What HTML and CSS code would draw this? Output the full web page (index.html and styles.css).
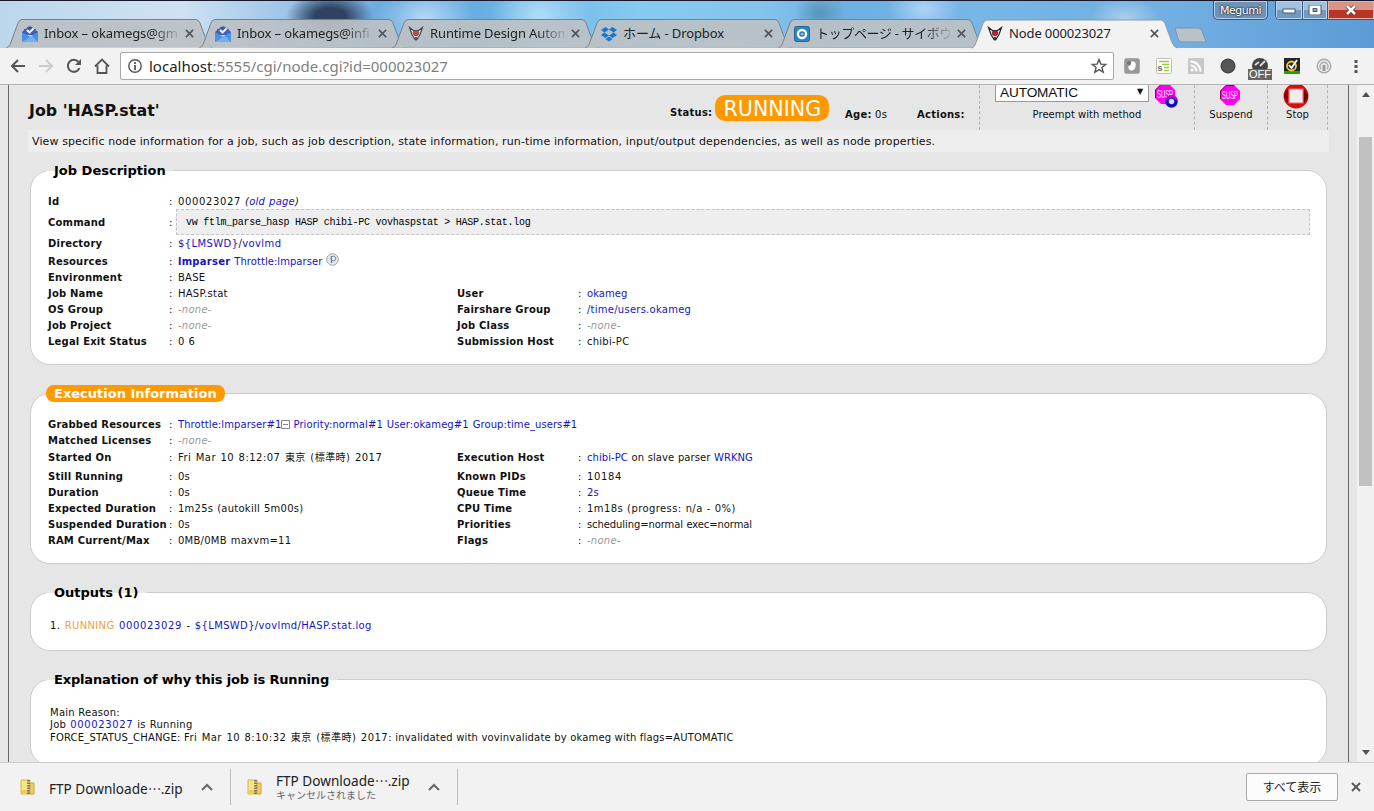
FILE: index.html
```html
<!DOCTYPE html>
<html lang="ja">
<head>
<meta charset="utf-8">
<title>Node 000023027</title>
<link rel="stylesheet" href="styles.css">
</head>
<body>
<svg class="defs" aria-hidden="true">
  <symbol id="tab" viewBox="0 0 207 29"><path d="M.5 28.5C3 28 4 26 5 23L12 4Q13.5.5 16 .5H190Q192.500 .5 194 4L201 23Q203 28 206.500 28.500"/></symbol>
  <symbol id="close" viewBox="0 0 10 10"><path d="M1 1l8 8M9 1L1 9" fill="none" stroke="#555" stroke-width="1.800"/></symbol>
  <symbol id="inbox" viewBox="0 0 16 16"><path d="M0 6L6 1Q8-.5 10 1l6 5v3H0z" fill="#3a55ae"/><path d="M2 3l12 0v6H2z" fill="#4260bd"/><path d="M5 4L7.500 6.500l4-4" fill="none" stroke="#fff" stroke-width="1.800"/><path d="M0 6l8 5 8-5v10H0z" fill="#4c91df"/><path d="M0 16l10-6 6 6z" fill="#70b0f0"/></symbol>
  <symbol id="fox" viewBox="0 0 16 16"><path d="M1.500 1.500L5.500 4.500h5l4-3L12 8.500 9 13.500H7L4 8.500z" fill="#e8e8e8" stroke="#222" stroke-width="1.200"/><circle cx="8" cy="7" r="2.700" fill="#e31515" stroke="#333" stroke-width=".8"/><path d="M7 11h2v3.500H7z" fill="#333"/></symbol>
  <symbol id="zip" viewBox="0 0 16 16"><path d="M1 1h9v14H1z" fill="#f7e487" stroke="#d9b845"/><path d="M10 4h4v11h-4z" fill="#edcf65" stroke="#c9a237"/><path d="M1.500 11h8v3.500h-8z" fill="#edcb58"/><path d="M8.500 1v14" stroke="#696969" stroke-width="2.500" stroke-dasharray="1.500 1"/></symbol>
  <symbol id="chev" viewBox="0 0 12 8"><path d="M1 7l5-5 5 5" fill="none" stroke="#666" stroke-width="2"/></symbol>
  <symbol id="oct" viewBox="0 0 20 20"><path d="M6 0h8l6 6v8l-6 6H6l-6-6V6z" fill="#f0e"/><path d="M14 .5H6L.5 6v8" fill="none" stroke="#801040"/></symbol>
</svg>

<header class="titlebar">
  <nav class="tabs">
    <div class="tab"><svg class="tab-bg"><use href="#tab"/></svg><svg class="fav"><use href="#inbox"/></svg><span class="name fade">Inbox – okamegs@gm</span><svg class="x"><use href="#close"/></svg></div>
    <div class="tab"><svg class="tab-bg"><use href="#tab"/></svg><svg class="fav"><use href="#inbox"/></svg><span class="name fade">Inbox – okamegs@infi</span><svg class="x"><use href="#close"/></svg></div>
    <div class="tab"><svg class="tab-bg"><use href="#tab"/></svg><svg class="fav dim"><use href="#fox"/></svg><span class="name fade">Runtime Design Autom</span><svg class="x"><use href="#close"/></svg></div>
    <div class="tab"><svg class="tab-bg"><use href="#tab"/></svg><svg class="fav" viewBox="0 0 16 16"><path d="M4.500 1L8 3.500 3.500 6.500 0 4zM11.500 1L8 3.500l4.500 3L16 4zM0 9l3.500-2.500L8 9.500 4.500 12zM16 9l-3.500-2.500L8 9.500l3.500 2.500zM8 10.500l3.500 2.500L8 15.500 4.500 13z" fill="#1677d2"/></svg><span class="name">ホーム - Dropbox</span><svg class="x"><use href="#close"/></svg></div>
    <div class="tab"><svg class="tab-bg"><use href="#tab"/></svg><svg class="fav" viewBox="0 0 16 16"><rect x=".5" y=".5" width="15" height="15" rx="2" fill="#2986c4" stroke="#2e6489"/><circle cx="8" cy="8" r="4" fill="#1d6fac" stroke="#fff" stroke-width="2.400"/><circle cx="8" cy="8" r="1.500" fill="#8bc4e7"/></svg><span class="name fade jp">トップページ - サイボウ</span><svg class="x"><use href="#close"/></svg></div>
    <div class="tab active"><svg class="tab-bg"><use href="#tab"/></svg><svg class="fav"><use href="#fox"/></svg><span class="name">Node 000023027</span><svg class="x"><use href="#close"/></svg></div>
    <svg class="newtab" viewBox="0 0 33 16"><path d="M1 1h23q3 0 4 3l4 11H8q-3 0-4-3z" fill="#b8c2c9" stroke="#7f94a7"/></svg>
  </nav>
  <div class="user">Megumi</div>
  <div class="winbtns">
    <span class="wb min"><svg viewBox="0 0 14 10"><rect x="1" y="4" width="12" height="4" fill="#fff" stroke="#485870"/></svg></span>
    <span class="wb max"><svg viewBox="0 0 14 10"><path d="M1 0h12v10H1zM5 3.500v3h4v-3z" fill="#fff" fill-rule="evenodd" stroke="#485870"/></svg></span>
    <span class="wb cls"><svg viewBox="0 0 14 10"><path d="M3 1l8 8M11 1L3 9" stroke="#533" stroke-width="4"/><path d="M3 1l8 8M11 1L3 9" stroke="#fff" stroke-width="2.500"/></svg></span>
  </div>
</header>

<div class="toolbar">
  <svg class="nav" viewBox="0 0 16 16"><path d="M15 8H2M8 2L2 8l6 6" fill="none" stroke="#555" stroke-width="2"/></svg>
  <svg class="nav" viewBox="0 0 16 16"><path d="M1 8h13M8 2l6 6-6 6" fill="none" stroke="#ccc" stroke-width="2"/></svg>
  <svg class="nav" viewBox="0 0 16 16"><path d="M13.500 10A6 6 0 1 1 12.500 4" fill="none" stroke="#555" stroke-width="2"/><path d="M15 1v6H9z" fill="#555"/></svg>
  <svg class="nav" viewBox="0 0 16 16"><path d="M1 8.500L8 1.500l7 7M3.500 7.500V15h9V7.500" fill="none" stroke="#555" stroke-width="1.800"/></svg>
  <div class="omnibox">
    <svg class="info" viewBox="0 0 14 14"><circle cx="7" cy="7" r="6.200" fill="none" stroke="#555" stroke-width="1.400"/><path d="M7 3v2M7 6v5" stroke="#555" stroke-width="1.800"/></svg>
    <span class="url"><b>localhost</b>:5555/cgi/node.cgi?id=000023027</span>
    <svg class="star" viewBox="0 0 16 16"><path d="M8 1.500l1.800 4.600 4.900.3-3.800 3.100 1.300 4.800L8 11.600l-4.200 2.700 1.300-4.800-3.800-3.100 4.900-.3z" fill="none" stroke="#555" stroke-width="1.400"/></svg>
  </div>
  <div class="exts">
    <svg viewBox="0 0 16 16"><rect x=".5" y=".5" width="15" height="15" rx="2" fill="#989898" stroke="#aaa"/><path d="M7 3.500C11 3 12.500 5 11.500 8.500 11 11 9.500 12.500 8 12.500 5 12.500 4 10.500 4.500 8 6.500 8 7.500 6 7 3.500z" fill="#fff"/><circle cx="5" cy="5" r="2" fill="#777"/></svg>
    <svg viewBox="0 0 16 16"><rect x=".5" y=".5" width="15" height="15" rx="1" fill="#fff" stroke="#bbb"/><path d="M3 3.500h10M6 6.500h7M8 9.500h5M8 12.500h5" stroke="#9c3" stroke-width="1.500"/><text x="1.500" y="13" font-size="9" font-weight="bold" fill="#666">s</text></svg>
    <svg viewBox="0 0 16 16"><rect width="16" height="16" rx="1" fill="#c8c8c8"/><circle cx="4" cy="12" r="1.500" fill="#fff"/><path d="M2.500 7.500a6 6 0 0 1 6 6M2.500 3.500a10 10 0 0 1 10 10" fill="none" stroke="#fff" stroke-width="2"/></svg>
    <svg viewBox="0 0 16 16"><circle cx="8" cy="8" r="7" fill="#555" stroke="#333"/></svg>
    <span class="offext"><svg viewBox="0 0 16 16"><circle cx="8" cy="8" r="8" fill="#444"/><path d="M3 7l4-3M8 8l5-5" stroke="#ddd" fill="none" stroke-width="1.800"/></svg><i>OFF</i></span>
    <svg viewBox="0 0 16 16"><rect width="16" height="16" fill="#252525"/><path d="M0 14.500h16" stroke="#1a0" stroke-width="3"/><circle cx="7.500" cy="8" r="4.500" fill="none" stroke="#fdc515" stroke-width="1.800"/><path d="M5 7l2.500 3L13 2" fill="none" stroke="#fff" stroke-width="1.800"/></svg>
    <svg viewBox="0 0 16 16"><circle cx="8" cy="8" r="6.800" fill="#eee" stroke="#aaa" stroke-width="1.400"/><path d="M5 11a4 4 0 1 1 6 0" fill="none" stroke="#aaa" stroke-width="1.500"/><path d="M6.500 7h3v6h-3z" fill="#999"/></svg>
    <svg viewBox="0 0 16 16"><path d="M6.500 2h3v3h-3zM6.500 7h3v3h-3zM6.500 12h3v3h-3z" fill="#555"/></svg>
  </div>
</div>

<div class="viewport">
  <main class="page">
    <div class="head">
      <h1>Job 'HASP.stat'</h1>
      <div class="status"><b>Status:</b><span class="badge">RUNNING</span></div>
      <div class="age"><b>Age:</b> 0s</div>
      <div class="actlabel"><b>Actions:</b></div>
      <div class="cell preempt">
        <div class="line"><span class="select">AUTOMATIC<i>▼</i></span><svg class="pre" viewBox="0 0 24 24"><use href="#oct" x="0" y="0" width="20" height="20"/><text x="2" y="14" font-size="10" class="susp" textLength="16" lengthAdjust="spacingAndGlyphs">SUSP</text><circle cx="16.500" cy="17.500" r="4.500" fill="#dde" stroke="#11b" stroke-width="3.500"/><path d="M11.500 16a5.200 5.200 0 0 1 10 0" fill="none" stroke="#c0c" stroke-width="2.500"/></svg></div>
        <span>Preempt with method</span>
      </div>
      <div class="cell suspend"><svg class="ic20" viewBox="0 0 20 20"><use href="#oct" width="20" height="20"/><text x="2" y="14" font-size="10" class="susp" textLength="16" lengthAdjust="spacingAndGlyphs">SUSP</text></svg><span>Suspend</span></div>
      <div class="cell stop"><svg class="ic26" viewBox="0 0 26 26"><circle cx="13" cy="13" r="12.500" fill="#d80d0d"/><path d="M1 13a12 12 0 0 1 4-7v14a12 12 0 0 1-4-7M25 13a12 12 0 0 0-4-7v14a12 12 0 0 0 4-7" fill="#790000"/><rect x="6" y="6" width="14" height="14" fill="#eee" stroke="#f66"/></svg><span>Stop</span></div>
    </div>
    <div class="desc">View specific node information for a job, such as job description, state information, run-time information, input/output dependencies, as well as node properties.</div>

    <section class="panel p1">
      <h2>Job Description</h2>
      <div class="row low"><b>Id</b><i>:</i><span><span class="num">000023027</span> <em>(<a>old page</a>)</em></span></div>
      <div class="row cmd"><b>Command</b><i>:</i><code>vw ftlm_parse_hasp HASP chibi-PC vovhaspstat &gt; HASP.stat.log</code></div>
      <div class="row h17"><b>Directory</b><i>:</i><span class="wider"><a>${LMSWD}</a>/<a>vovlmd</a></span></div>
      <div class="row h18 low"><b>Resources</b><i>:</i><span class="res"><span><a><strong>lmparser</strong></a> <a class="tight">Throttle:lmparser</a></span><svg class="mag" viewBox="0 0 13 13"><circle cx="6.500" cy="6.500" r="5.800" fill="#e4e8ec" stroke="#9aa6b0"/><circle cx="7.300" cy="5.500" r="2.300" fill="#fff" stroke="#64809f"/><path d="M5.500 3v7" stroke="#64809f" stroke-width="1.300"/></svg></span></div>
      <div class="row"><b>Environment</b><i>:</i><span>BASE</span></div>
      <div class="row"><b>Job Name</b><i>:</i><span>HASP.stat</span><b>User</b><i>:</i><span class="tight"><a>okameg</a></span></div>
      <div class="row"><b>OS Group</b><i>:</i><span class="none">-none-</span><b>Fairshare Group</b><i>:</i><span><a>/time/users.okameg</a></span></div>
      <div class="row"><b>Job Project</b><i>:</i><span class="none">-none-</span><b>Job Class</b><i>:</i><span class="none">-none-</span></div>
      <div class="row"><b>Legal Exit Status</b><i>:</i><span>0 6</span><b>Submission Host</b><i>:</i><span>chibi-PC</span></div>
    </section>

    <section class="panel p2">
      <h2 class="hot">Execution Information</h2>
      <div class="row"><b>Grabbed Resources</b><i>:</i><span class="wide"><a>Throttle:lmparser#1</a><svg class="minus" viewBox="0 0 9 9"><path d="M.5.5h8v8h-8zM2 4.500h5" fill="#fff" stroke="#888"/></svg> <a>Priority:normal#1</a> <a>User:okameg#1</a> <a>Group:time_users#1</a></span></div>
      <div class="row"><b>Matched Licenses</b><i>:</i><span class="none">-none-</span></div>
      <div class="row h20"><b>Started On</b><i>:</i><span class="date">Fri Mar 10 8:12:07 東京 (標準時) 2017</span><b>Execution Host</b><i>:</i><span class="tight"><a>chibi-PC</a> on slave parser <a>WRKNG</a></span></div>
      <div class="row"><b>Still Running</b><i>:</i><span>0s</span><b>Known PIDs</b><i>:</i><span class="num">10184</span></div>
      <div class="row"><b>Duration</b><i>:</i><span>0s</span><b>Queue Time</b><i>:</i><span><a>2s</a></span></div>
      <div class="row"><b>Expected Duration</b><i>:</i><span>1m25s (autokill 5m00s)</span><b>CPU Time</b><i>:</i><span class="wider">1m18s (progress: n/a - 0%)</span></div>
      <div class="row"><b>Suspended Duration</b><i>:</i><span>0s</span><b>Priorities</b><i>:</i><span class="tight2">scheduling=normal exec=normal</span></div>
      <div class="row"><b>RAM Current/Max</b><i>:</i><span>0MB/0MB maxvm=11</span><b>Flags</b><i>:</i><span class="none">-none-</span></div>
    </section>

    <section class="panel p3">
      <h2>Outputs (1)</h2>
      <p class="out">1. <span class="run">RUNNING</span> <a class="num">000023029</a> - <a>${LMSWD}</a>/<a>vovlmd</a>/<a>HASP.stat.log</a></p>
    </section>

    <section class="panel p4">
      <h2 class="why">Explanation of why this job is Running</h2>
      <p>Main Reason:</p>
      <p class="job">Job <a class="num">000023027</a> is Running</p>
      <p class="force">FORCE_STATUS_CHANGE: <span class="date">Fri Mar 10 8:10:32 東京 (標準時) 2017:</span> invalidated with vovinvalidate by okameg with flags=AUTOMATIC</p>
    </section>
  </main>
  <div class="scroll"><svg viewBox="0 0 8 5"><path d="M0 5l4-5 4 5z" fill="#505050"/></svg><div class="thumb"></div><svg class="down" viewBox="0 0 8 5"><path d="M0 0l4 5 4-5z" fill="#505050"/></svg></div>
</div>

<footer class="downloads">
  <div class="dl first"><svg class="fav"><use href="#zip"/></svg><div class="file">FTP Downloade<span class="dots">⋯</span>.zip</div><svg class="chev"><use href="#chev"/></svg></div>
  <div class="dl second"><svg class="fav"><use href="#zip"/></svg><div class="file">FTP Downloade<span class="dots">⋯</span>.zip<small>キャンセルされました</small></div><svg class="chev"><use href="#chev"/></svg></div>
  <button class="all">すべて表示</button>
  <svg class="dlx"><use href="#close"/></svg>
</footer>
</body>
</html>
```
FILE: styles.css
```css
* { box-sizing: border-box; }
body { margin: 0; width: 1374px; height: 811px; overflow: hidden; display: flex; flex-direction: column; background: #f2f2f2; font-family: "DejaVu Sans", "Noto Sans CJK JP", sans-serif; color: #111; }
svg { display: block; flex: none; }
.defs { position: absolute; width: 0; height: 0; }

.titlebar { position: relative; height: 48px; display: flex; align-items: flex-start; border-top: 1px solid #14182a;
  background:
    radial-gradient(ellipse 44px 26px at 330px 16px, #2f4262 35%, transparent 100%),
    radial-gradient(ellipse 35px 22px at 1125px 18px, #a6cdec 10%, transparent 100%),
    radial-gradient(ellipse 36px 26px at 924px 8px, #a9d0f5 10%, transparent 100%),
    radial-gradient(ellipse 50px 36px at 425px 18px, #b0d5f5 10%, transparent 100%),
    radial-gradient(ellipse 50px 36px at 540px 14px, #a9dbf5 10%, transparent 100%),
    radial-gradient(ellipse 26px 20px at 820px 12px, #5a97bd 10%, transparent 100%),
    linear-gradient(90deg, #bcd6ec 0, #cfe2f3 180px, #9cc4e8 290px, #62a6dc 400px, #68aee0 480px, #86caf0 640px, #85c4ec 760px, #6eb0e2 840px, #78b6e6 980px, #71aee2 1180px, #5d9bd6 1374px); }
.tabs { display: flex; padding: 18px 0 0 6px; width: 1213px; flex: none; }
.tab { position: relative; width: 193px; height: 29px; flex: none; display: flex; align-items: center; padding-left: 16px; }
.tab-bg { position: absolute; left: 0; top: 0; width: 207px; height: 29px; fill: #bbc1c5; fill-opacity: .93; stroke: #77828c; }
.active { z-index: 1; }
.active .tab-bg { fill: #f2f2f2; fill-opacity: 1; height: 30px; stroke: #8b9aa6; }
.fav { position: relative; width: 16px; height: 16px; }
.dim { opacity: .75; }
.name { position: relative; margin: 0 -2px 1px 6px; width: 134px; white-space: nowrap; font: 13px/20px "Noto Sans", "Noto Sans CJK JP", sans-serif; letter-spacing: -.12px; color: #222; }
.jp { letter-spacing: -.35px; }
.fade { -webkit-mask-image: linear-gradient(90deg, #000 106px, rgba(0,0,0,.15) 134px); mask-image: linear-gradient(90deg, #000 106px, rgba(0,0,0,.15) 134px); }
.x { position: relative; width: 9px; height: 9px; margin-left: 9px; }
.newtab { width: 33px; height: 16px; margin: 8px 0 0 10px; }
.user { width: 55px; height: 19px; border: 1px solid #39577a; border-top: 0; border-radius: 0 0 5px 5px; background: #6f93b7; box-shadow: inset 0 0 0 1px #b5d0ea; font: 11px/19px "DejaVu Sans", sans-serif; letter-spacing: -.5px; color: #fff; text-align: center; text-shadow: 0 0 2px #222, 0 0 2px #222; }
.winbtns { display: flex; margin-left: 7px; width: 99px; height: 19px; border: 1px solid #39577a; border-width: 0 0 1px 1px; border-radius: 0 0 0 5px; overflow: hidden; }
.wb { display: flex; align-items: center; justify-content: center; height: 18px; border-right: 1px solid #39577a; background: linear-gradient(#a2c1df 50%, #7199c2 50%); box-shadow: inset 0 0 0 1px #bad5ee; }
.wb svg { width: 14px; height: 10px; }
.min { width: 28px; } .max { width: 27px; }
.cls { width: 48px; border: 0; background: linear-gradient(#d89587 50%, #b83524 50%); box-shadow: inset 0 0 0 1px #e3b3a8; }

.toolbar { height: 37px; display: flex; align-items: center; padding-left: 10px; background: #f2f2f2; border-bottom: 1px solid #b4b4b4; }
.nav { width: 16px; height: 16px; margin-right: 12px; }
.omnibox { display: flex; align-items: center; width: 994px; height: 28px; margin-left: -2px; border: 1px solid #a8a8a8; border-radius: 2px; background: #fff; }
.info { width: 14px; height: 14px; margin-left: 7px; }
.url { margin: 0 0 1px 7px; flex: 1; font: 15px/24px "Noto Sans", sans-serif; color: #808080; }
.url b { font-weight: 400; color: #222; }
.star { width: 16px; height: 16px; margin-right: 6px; }
.exts { display: flex; gap: 16px; margin-left: 10px; font-family: "Liberation Sans", sans-serif; }
.exts svg { width: 16px; height: 16px; }
.offext { position: relative; width: 16px; }
.offext i { position: absolute; left: -4px; top: 11px; width: 24px; height: 11px; background: #666; color: #fff; font: 11px/11px "Liberation Sans", sans-serif; text-align: center; }

.viewport { height: 677px; display: flex; background: #e6e6e6; overflow: hidden; }
.page { width: 1341px; margin-left: 8px; padding: 0 21px; border: solid #666; border-width: 0 1px; font-size: 10px; letter-spacing: .25px; overflow: hidden; flex: none; }
.head { display: flex; height: 45px; width: 1300px; margin-left: -2px; }
h1 { width: 642px; margin: 0; font-size: 15.800px; line-height: 18px; padding: 17px 0 0 1px; letter-spacing: .05px; flex: none; }
.status { display: flex; width: 175px; padding-top: 10px; line-height: 35px; flex: none; }
.badge { height: 26px; width: 114px; margin-left: 3px; border-radius: 10px; background: #f90; color: #fff; font-size: 20.600px; line-height: 28px; text-align: center; letter-spacing: 0; }
.age { width: 72px; padding-top: 23px; line-height: 14px; flex: none; }
.actlabel { width: 62px; padding-top: 23px; line-height: 14px; flex: none; }
.cell { height: 45px; border-left: 1px dashed #b4b4b4; display: flex; flex-direction: column; align-items: center; line-height: 14px; letter-spacing: .03px; flex: none; }
.cell > span { margin-top: auto; margin-bottom: 8px; }
.preempt { width: 215px; }
.line { display: flex; align-self: flex-start; height: 22px; padding-left: 15px; }
.select { width: 154px; height: 17px; background: #fff; border: 1px solid #999; border-top: 0; display: flex; justify-content: space-between; padding: 0 5px 0 4px; font: 13.600px/15px "Liberation Sans", sans-serif; letter-spacing: -.1px; }
.select i { font: 8px/14px "DejaVu Sans", sans-serif; }
.pre { width: 24px; height: 24px; margin: -1px 0 0 6px; }
.susp { fill: #fff; font-family: "Liberation Sans", sans-serif; letter-spacing: 0; }
.suspend { width: 73px; }
.suspend svg { margin-right: 3px; }
.stop { width: 61px; border-right: 1px dashed #b4b4b4; }
.ic20 { width: 20px; height: 20px; }
.ic26 { width: 26px; height: 26px; margin-top: -2px; margin-bottom: -4px; margin-right: 4px; }
.desc { width: 1301px; height: 22px; margin-left: -2px; padding-left: 4px; background: #eee; font-size: 11px; line-height: 23px; letter-spacing: .11px; white-space: nowrap; }

.panel { position: relative; width: 1297px; background: #fff; border: 1px solid #ccc; border-radius: 20px; padding: 22px 16px 0 17px; }
.panel h2 { position: absolute; left: 15px; top: -9px; margin: 0; padding: 0 8px; height: 17px; font-size: 13px; line-height: 17px; letter-spacing: 0; white-space: nowrap; background: linear-gradient(#e6e6e6 9px, #fff 9px); color: #000; }
.panel h2.hot { background: #f90; color: #fff; border-radius: 8px; }
.panel h2.why { letter-spacing: -.17px; }
.p1 { height: 195px; margin-top: 18px; }
.p2 { height: 171px; margin-top: 28px; padding-top: 23px; }
.p3 { height: 59px; margin-top: 28px; padding: 27px 0 0 19px; }
.p4 { height: 87px; margin-top: 28px; padding: 27px 0 0 19px; }
.row { display: grid; grid-template-columns: 121px 9px 279px 121px 9px 1fr; height: 16px; align-items: center; line-height: 14px; white-space: nowrap; word-spacing: .5px; }
.row b { letter-spacing: .2px; word-spacing: 0; }
.row i { font-style: normal; }
.row .num, .num { letter-spacing: .64px; }
.date { letter-spacing: .47px; word-spacing: .8px; }
.tight { letter-spacing: .05px; }
.tight2 { letter-spacing: -.1px; }
.wider { letter-spacing: .4px; }
.low { padding-top: 1px; }
.res { display: flex; align-items: center; gap: 4px; }
.h17 { height: 17px; } .h18 { height: 18px; }
.h20 { height: 20px; padding-bottom: 2px; }
.cmd { height: 26px; grid-template-columns: 121px 7px 1fr; }
.cmd b, .cmd i { padding-top: 1px; }
code { height: 26px; border: 1px dashed #c4c4c4; background: #eee; padding-left: 9px; font: 10px/25px "Liberation Mono", monospace; letter-spacing: -.26px; word-spacing: 0; color: #000; }
.wide { display: flex; gap: 4px; align-items: center; letter-spacing: .08px; }
.minus { width: 9px; height: 9px; margin: -2px -1px 0 -4px; }
.mag { position: relative; width: 13px; height: 13px; top: -2px; }
a { color: #1515c0; }
.none { color: #999; font-style: italic; }
p { margin: 0; height: 12px; line-height: 12px; white-space: nowrap; }
.out { letter-spacing: .35px; word-spacing: .9px; }
.job { word-spacing: .6px; }
.run { color: #f0a040; }
.force { height: 14px; line-height: 14px; letter-spacing: .17px; }

.scroll { margin-left: 8px; width: 17px; background: #f1f1f1; display: flex; flex-direction: column; align-items: center; padding: 7px 0; }
.scroll svg { width: 8px; height: 5px; }
.thumb { width: 13px; height: 349px; margin-top: 40px; background: #c1c1c1; }
.scroll .down { margin-top: auto; }

.downloads { height: 49px; display: flex; align-items: center; background: #f2f2f2; border-top: 1px solid #ccc; font: 13.600px/16px "Noto Sans", "Noto Sans CJK JP", sans-serif; color: #222; }
.dl { display: flex; align-items: center; height: 36px; border-right: 1px solid #bbb; }
.first { width: 231px; padding-left: 20px; }
.second { width: 227px; padding-left: 16px; }
.file { width: 140px; margin-left: 13px; padding-top: 3px; white-space: nowrap; }
.second .file { padding-top: 0; }
.dots { display: inline-block; width: 13px; text-align: center; }
.file small { display: block; font-size: 10px; line-height: 12px; color: #666; }
.chev { width: 12px; height: 8px; margin-left: 12px; }
.all { width: 92px; height: 28px; margin-left: auto; padding: 0; border: 1px solid #aaa; border-radius: 2px; background: #fcfcfc; font: 12px/24px "Noto Sans CJK JP", sans-serif; color: #222; }
.dlx { width: 10px; height: 10px; margin: 0 13px 0 13px; }
```
